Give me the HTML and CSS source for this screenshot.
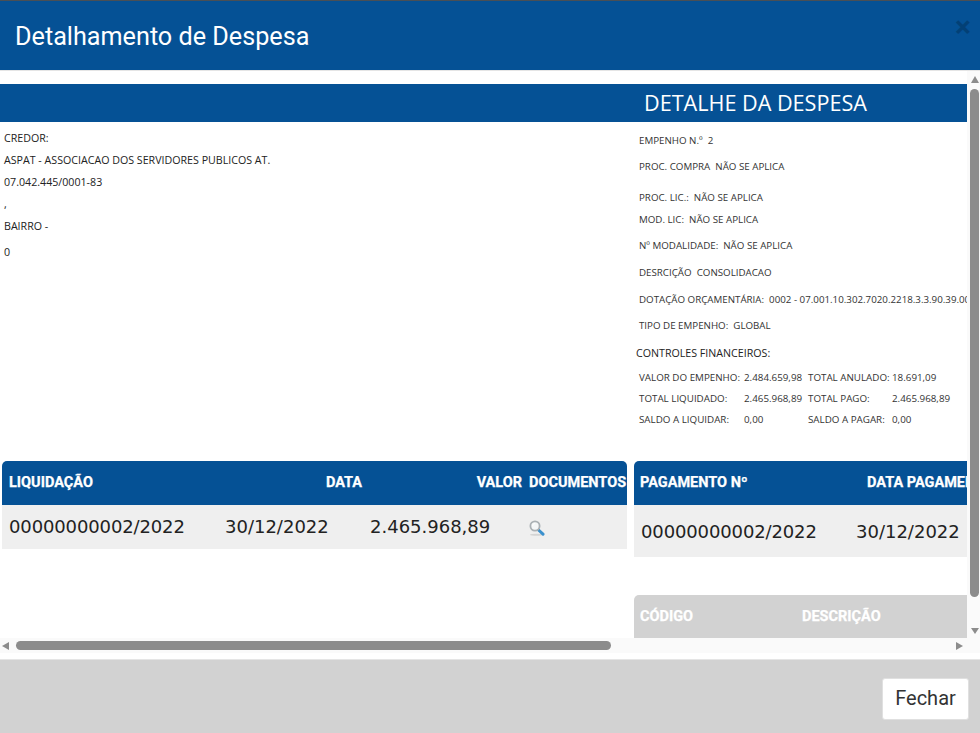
FILE: index.html
```html
<!DOCTYPE html>
<html lang="pt-BR">
<head>
<meta charset="utf-8">
<title>Detalhamento de Despesa</title>
<link rel="stylesheet" href="styles.css">
</head>
<body>
<div class="modal">
  <header class="modal-header">
    <h1 class="modal-title">Detalhamento de Despesa</h1>
    <button class="close" type="button">×</button>
  </header>
  <div class="scroller">
    <main class="viewport">
      <div class="canvas">
        <h2 class="banner">DETALHE DA DESPESA</h2>
        <section class="details">
          <div class="creditor">
            <p class="c-line">CREDOR:</p>
            <p class="c-line">ASPAT - ASSOCIACAO DOS SERVIDORES PUBLICOS AT.</p>
            <p class="c-line">07.042.445/0001-83</p>
            <p class="c-line">,</p>
            <p class="c-line">BAIRRO -</p>
            <p class="c-line c-last">0</p>
          </div>
          <div class="expense">
            <p class="e-line e1">EMPENHO N.º&nbsp; 2</p>
            <p class="e-line e2">PROC. COMPRA&nbsp; NÃO SE APLICA</p>
            <p class="e-line e3">PROC. LIC.:&nbsp; NÃO SE APLICA</p>
            <p class="e-line e4">MOD. LIC:&nbsp; NÃO SE APLICA</p>
            <p class="e-line e5">Nº MODALIDADE:&nbsp; NÃO SE APLICA</p>
            <p class="e-line e6">DESRCIÇÃO&nbsp; CONSOLIDACAO</p>
            <p class="e-line e6">DOTAÇÃO ORÇAMENTÁRIA:&nbsp; 0002 - 07.001.10.302.7020.2218.3.3.90.39.00.00</p>
            <p class="e-line e5">TIPO DE EMPENHO:&nbsp; GLOBAL</p>
            <h3 class="controls-title">CONTROLES FINANCEIROS:</h3>
            <div class="finance">
              <span>VALOR DO EMPENHO:</span><span>2.484.659,98</span><span>TOTAL ANULADO:</span><span>18.691,09</span>
              <span>TOTAL LIQUIDADO:</span><span>2.465.968,89</span><span>TOTAL PAGO:</span><span>2.465.968,89</span>
              <span>SALDO A LIQUIDAR:</span><span>0,00</span><span>SALDO A PAGAR:</span><span>0,00</span>
            </div>
          </div>
        </section>
        <section class="tables">
          <table class="grid grid-left">
            <thead>
              <tr><th class="l1">LIQUIDAÇÃO</th><th class="l2 right">DATA</th><th class="l3 right">VALOR</th><th class="l4">DOCUMENTOS</th></tr>
            </thead>
            <tbody>
              <tr>
                <td>00000000002/2022</td><td>30/12/2022</td><td>2.465.968,89</td>
                <td>
                  <svg class="lens" viewBox="0 0 16 16" width="16" height="16" aria-hidden="true">
                    <ellipse cx="7.5" cy="14.8" rx="6.5" ry="1" fill="#d4d4d4"/>
                    <path d="M9 9.5 L14 14.2" stroke="#3a90cd" stroke-width="3" stroke-linecap="round"/>
                    <circle cx="6" cy="6" r="4.6" fill="#f4f6f7" stroke="#aab0b4" stroke-width="1.8"/>
                    <path d="M3.6 6 A2.5 2.5 0 0 1 6 3.5" fill="none" stroke="#fff" stroke-width="1"/>
                  </svg>
                </td>
              </tr>
            </tbody>
          </table>
          <div class="right-stack">
            <table class="grid grid-right">
              <thead>
                <tr><th class="r1">PAGAMENTO Nº</th><th class="r2">DATA PAGAMENTO</th></tr>
              </thead>
              <tbody>
                <tr><td>00000000002/2022</td><td>30/12/2022</td></tr>
              </tbody>
            </table>
            <table class="grid grid-muted">
              <thead>
                <tr><th class="m1">CÓDIGO</th><th class="m2">DESCRIÇÃO</th></tr>
              </thead>
            </table>
          </div>
        </section>
      </div>
    </main>
    <div class="vbar">
      <span class="arrow-up"></span>
      <span class="vthumb"></span>
      <span class="arrow-down"></span>
    </div>
    <div class="hbar">
      <span class="arrow-left"></span>
      <span class="hthumb"></span>
      <span class="arrow-right"></span>
    </div>
  </div>
  <footer class="modal-footer">
    <button class="btn" type="button">Fechar</button>
  </footer>
</div>
</body>
</html>
```

FILE: styles.css
```css
* { box-sizing: border-box; }
html, body { margin: 0; height: 100%; overflow: hidden; background: #fff; }
p, h1, h2, h3 { margin: 0; font-weight: 400; }

.modal { width: 980px; height: 733px; display: flex; flex-direction: column; font-family: "Open Sans", sans-serif; }

.modal-header {
  height: 71px; flex: none; display: flex; align-items: center; justify-content: space-between;
  padding: 0 9px 0 15px; background: #055195; border-top: 1px solid #4a4f55; border-bottom: 1px solid #e5e5e5;
}
.modal-title { font: 400 25.2px/30px Roboto, sans-serif; color: #fff; margin-top: 3px; }
.close {
  border: 0; padding: 0; background: none; font: 700 30px/30px Roboto, sans-serif; color: #000; opacity: .2;
  margin-top: -18px;
}

.scroller { height: 588px; flex: none; display: grid; grid-template-columns: 967px 13px; grid-template-rows: 567px 15px; align-content: start; background: #fff; }
.viewport { overflow: hidden; background: #fff; }
.canvas { width: 1500px; padding-top: 13px; }

.banner {
  width: 967px; height: 38px; background: #055195; color: #fff; padding-left: 644px;
  font: 400 21.6px/38px "Open Sans", sans-serif; white-space: nowrap;
}

.details { display: flex; height: 339px; width: 967px; overflow: hidden; font-size: 10.67px; color: #333; }
.creditor { width: 639px; flex: none; padding: 5px 0 0 4px; color: #222; }
.c-line { line-height: 22px; white-space: nowrap; }
.c-last { margin-top: 4px; }
.expense { flex: 1; min-width: 0; white-space: nowrap; padding-top: 9px; }
.e-line { line-height: 20px; font-size: 9.75px; }
.e2 { margin-top: 6px; }
.e3 { margin-top: 11px; }
.e4 { margin-top: 2px; }
.e5 { margin-top: 6px; }
.e6 { margin-top: 7px; }
.controls-title { margin: 7px 0 0 -3px; font-size: 10.67px; line-height: 20px; color: #222; }
.finance { display: grid; grid-template-columns: 105px 64px 84px auto; grid-auto-rows: 21px; font-size: 9.8px; line-height: 21px; margin-top: 4px; }

.tables { display: flex; align-items: flex-start; gap: 7px; padding-left: 2px; }
.grid { border-collapse: separate; border-spacing: 0; table-layout: fixed; font-family: "DejaVu Sans", sans-serif; }
.grid th {
  height: 44px; padding: 0 0 0 7px; background: #055195; color: #fff; text-align: left;
  font: 700 14.5px/16px Roboto, sans-serif; white-space: nowrap; -webkit-text-stroke: .25px;
}
.grid th.right { text-align: right; }
.grid td { background: #efefef; font-size: 18px; color: #222; white-space: nowrap; vertical-align: middle; }
.grid td:first-child { letter-spacing: -.13px; }
.grid th:first-child { border-top-left-radius: 5px; }
.grid th:last-child { border-top-right-radius: 5px; }

.grid-left { width: 625px; }
.l1 { width: 215px; }
.l2 { width: 152px; }
.l3 { width: 158px; }
.l4 { width: 100px; }
.grid .l2 { padding-right: 7px; }
.grid .l3 { padding-right: 5px; }
.grid .l4 { padding-left: 2px; }
.grid-left td { height: 44px; padding: 0 0 2px 7px; }
.grid-left td:nth-child(2) { padding-left: 8px; }
.grid-left td:nth-child(3) { padding-left: 1px; }
.grid-left td:nth-child(4) { padding: 0 0 0 2px; }
.lens { display: block; margin-top: 2px; }

.right-stack { display: flex; flex-direction: column; gap: 38px; width: 700px; flex: none; }
.grid-right, .grid-muted { width: 700px; }
.r1 { width: 215px; }
.r2 { width: 485px; }
.grid .r1, .grid .m1 { padding-left: 6px; }
.grid .r2 { padding-left: 18px; }
.grid-right td { height: 52px; padding: 0 0 0 7px; }
.grid .m2 { padding-left: 6px; }
.grid-muted th { background: #d2d2d2; }
.m1 { width: 162px; }
.m2 { width: 538px; }

.vbar { background: #fafafa; display: flex; flex-direction: column; align-items: flex-end; padding-right: 1px; }
.arrow-up { margin-top: 5px; border-left: 4.5px solid transparent; border-right: 4.5px solid transparent; border-bottom: 7px solid #8c8c8c; }
.vthumb { width: 9px; height: 508px; margin-top: 6px; background: #8c8c8c; border-radius: 5px; }
.arrow-down { margin-top: 31px; border-left: 4.5px solid transparent; border-right: 4.5px solid transparent; border-top: 6px solid #8c8c8c; }

.hbar { grid-column: 1 / -1; background: #fafafa; display: flex; align-items: center; padding-left: 2px; height: 15px; }
.arrow-left { border-top: 4.5px solid transparent; border-bottom: 4.5px solid transparent; border-right: 7px solid #8c8c8c; }
.hthumb { width: 595px; height: 9px; margin-left: 7px; background: #8c8c8c; border-radius: 5px; }
.arrow-right { margin-left: 345px; border-top: 4.5px solid transparent; border-bottom: 4.5px solid transparent; border-left: 7px solid #8c8c8c; }

.modal-footer { flex: 1; background: #d2d2d2; border-top: 1px solid #e5e5e5; display: flex; justify-content: flex-end; align-items: flex-start; padding: 18px 11px 0 0; }
.btn { width: 87px; height: 42px; background: #fff; border: 1px solid #e0e0e0; border-radius: 3px; font: 400 20px/24px Roboto, sans-serif; color: #333; padding: 0 0 2px; }
```
